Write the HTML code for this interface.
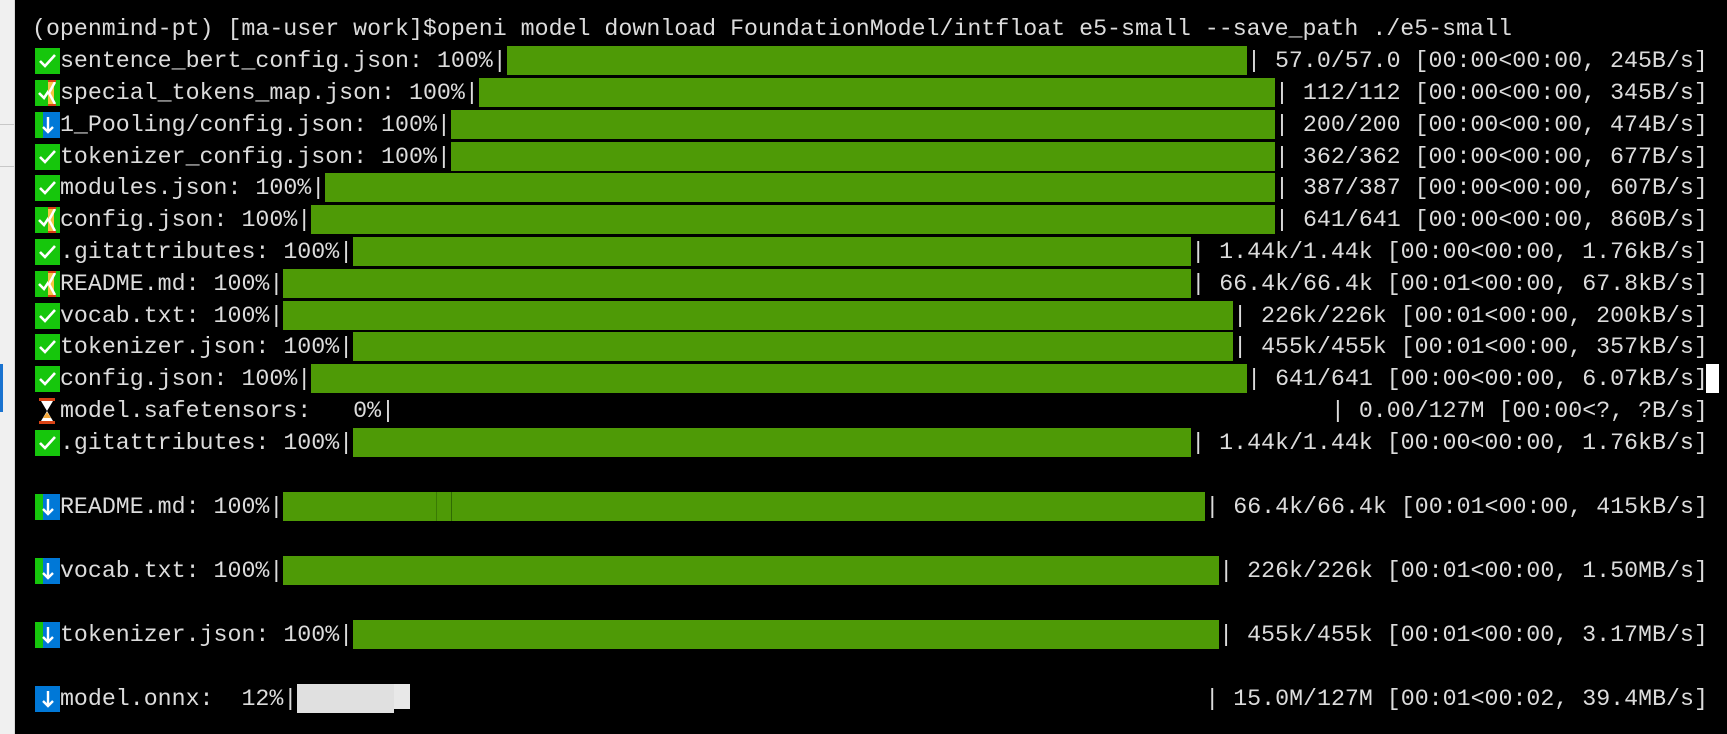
<!DOCTYPE html>
<html><head><meta charset="utf-8">
<style>
html,body{margin:0;padding:0;}
body{width:1727px;height:734px;background:#000;position:relative;overflow:hidden;}
.strip{position:absolute;left:0;top:0;width:14px;height:734px;background:#f0f0f0;border-right:1px solid #d8d8d8;}
.row{position:absolute;left:32px;height:32px;line-height:32px;white-space:pre;font-family:"Liberation Mono",monospace;font-size:23.28px;color:#dcdcdc;}
.b{display:inline-block;height:29px;vertical-align:top;margin-top:1px;background:#4e9a06;}
.e{display:inline-block;height:29px;vertical-align:top;margin-top:1px;}
.ic{display:inline-block;width:27.94px;height:32px;vertical-align:top;position:relative;}
.ic svg{position:absolute;left:3px;top:3px;}
</style></head><body>
<div class="strip"></div>
<div style="position:absolute;left:0;top:124px;width:14px;height:1px;background:#c8c8c8"></div>
<div style="position:absolute;left:0;top:166px;width:14px;height:1px;background:#c8c8c8"></div>
<div style="position:absolute;left:0;top:364px;width:3px;height:48px;background:#1a73d0"></div>

<div class="row" style="top:13px">(openmind-pt) [ma-user work]$openi model download FoundationModel/intfloat e5-small --save_path ./e5-small</div>

<div class="row" style="top:45px"><span class="ic"><svg width="25" height="26"><rect width="25" height="26" fill="#16c60c"/><path d="M5 13 L10 18 L20 7" stroke="#fff" stroke-width="2.6" fill="none"/></svg></span>sentence_bert_config.json: 100%|<span class="b" style="width:740.3px"></span>| 57.0/57.0 [00:00&lt;00:00, 245B/s]</div>

<div class="row" style="top:77px"><span class="ic"><svg width="25" height="26"><rect width="25" height="26" fill="#16c60c"/><path d="M4 13 L9 18 L15 9" stroke="#fff" stroke-width="2.6" fill="none"/><rect x="13" y="1" width="6" height="24" fill="#f4c542"/><path d="M20 2 L14 13 L20 24" stroke="#fff" stroke-width="2.5" fill="none"/><rect x="13" y="0" width="8" height="2" fill="#d84315"/><rect x="13" y="24" width="8" height="2" fill="#d84315"/></svg></span>special_tokens_map.json: 100%|<span class="b" style="width:796.2px"></span>| 112/112 [00:00&lt;00:00, 345B/s]</div>

<div class="row" style="top:109px"><span class="ic"><svg width="25" height="26"><rect width="25" height="26" fill="#0078d7"/><rect width="8" height="26" fill="#16c60c"/><path d="M13 5 V20 M8 15 L13 20 L18 15" stroke="#fff" stroke-width="2.4" fill="none"/></svg></span>1_Pooling/config.json: 100%|<span class="b" style="width:824.1px"></span>| 200/200 [00:00&lt;00:00, 474B/s]</div>

<div class="row" style="top:141px"><span class="ic"><svg width="25" height="26"><rect width="25" height="26" fill="#16c60c"/><path d="M5 13 L10 18 L20 7" stroke="#fff" stroke-width="2.6" fill="none"/></svg></span>tokenizer_config.json: 100%|<span class="b" style="width:824.1px"></span>| 362/362 [00:00&lt;00:00, 677B/s]</div>

<div class="row" style="top:172px"><span class="ic"><svg width="25" height="26"><rect width="25" height="26" fill="#16c60c"/><path d="M5 13 L10 18 L20 7" stroke="#fff" stroke-width="2.6" fill="none"/></svg></span>modules.json: 100%|<span class="b" style="width:949.8px"></span>| 387/387 [00:00&lt;00:00, 607B/s]</div>

<div class="row" style="top:204px"><span class="ic"><svg width="25" height="26"><rect width="25" height="26" fill="#16c60c"/><path d="M4 13 L9 18 L15 9" stroke="#fff" stroke-width="2.6" fill="none"/><rect x="13" y="1" width="6" height="24" fill="#f4c542"/><path d="M20 2 L14 13 L20 24" stroke="#fff" stroke-width="2.5" fill="none"/><rect x="13" y="0" width="8" height="2" fill="#d84315"/><rect x="13" y="24" width="8" height="2" fill="#d84315"/></svg></span>config.json: 100%|<span class="b" style="width:963.8px"></span>| 641/641 [00:00&lt;00:00, 860B/s]</div>

<div class="row" style="top:236px"><span class="ic"><svg width="25" height="26"><rect width="25" height="26" fill="#16c60c"/><path d="M5 13 L10 18 L20 7" stroke="#fff" stroke-width="2.6" fill="none"/></svg></span>.gitattributes: 100%|<span class="b" style="width:838.1px"></span>| 1.44k/1.44k [00:00&lt;00:00, 1.76kB/s]</div>

<div class="row" style="top:268px"><span class="ic"><svg width="25" height="26"><rect width="25" height="26" fill="#16c60c"/><path d="M4 13 L9 18 L15 9" stroke="#fff" stroke-width="2.6" fill="none"/><rect x="13" y="1" width="6" height="24" fill="#f4c542"/><path d="M20 2 L14 13 L20 24" stroke="#fff" stroke-width="2.5" fill="none"/><rect x="13" y="0" width="8" height="2" fill="#d84315"/><rect x="13" y="24" width="8" height="2" fill="#d84315"/></svg></span>README.md: 100%|<span class="b" style="width:908px"></span>| 66.4k/66.4k [00:01&lt;00:00, 67.8kB/s]</div>

<div class="row" style="top:300px"><span class="ic"><svg width="25" height="26"><rect width="25" height="26" fill="#16c60c"/><path d="M5 13 L10 18 L20 7" stroke="#fff" stroke-width="2.6" fill="none"/></svg></span>vocab.txt: 100%|<span class="b" style="width:949.8px"></span>| 226k/226k [00:01&lt;00:00, 200kB/s]</div>

<div class="row" style="top:331px"><span class="ic"><svg width="25" height="26"><rect width="25" height="26" fill="#16c60c"/><path d="M5 13 L10 18 L20 7" stroke="#fff" stroke-width="2.6" fill="none"/></svg></span>tokenizer.json: 100%|<span class="b" style="width:880px"></span>| 455k/455k [00:01&lt;00:00, 357kB/s]</div>

<div class="row" style="top:363px"><span class="ic"><svg width="25" height="26"><rect width="25" height="26" fill="#16c60c"/><path d="M5 13 L10 18 L20 7" stroke="#fff" stroke-width="2.6" fill="none"/></svg></span>config.json: 100%|<span class="b" style="width:935.9px"></span>| 641/641 [00:00&lt;00:00, 6.07kB/s]</div>
<div style="position:absolute;left:1706px;top:364px;width:13px;height:29px;background:#fff"></div>

<div class="row" style="top:395px"><span class="ic"><svg width="25" height="26"><rect x="4" y="0" width="16" height="3" fill="#d84315"/><rect x="4" y="23" width="16" height="3" fill="#d84315"/><path d="M6 3 H18 L12 13 L18 23 H6 L12 13 Z" fill="#fff"/><path d="M8 20 L12 14 L16 20 Z" fill="#f4a83a"/></svg></span>model.safetensors:   0%|<span class="e" style="width:935.9px"></span>| 0.00/127M [00:00&lt;?, ?B/s]</div>

<div class="row" style="top:427px"><span class="ic"><svg width="25" height="26"><rect width="25" height="26" fill="#16c60c"/><path d="M5 13 L10 18 L20 7" stroke="#fff" stroke-width="2.6" fill="none"/></svg></span>.gitattributes: 100%|<span class="b" style="width:838.1px"></span>| 1.44k/1.44k [00:00&lt;00:00, 1.76kB/s]</div>

<div class="row" style="top:491px"><span class="ic"><svg width="25" height="26"><rect width="25" height="26" fill="#0078d7"/><rect width="8" height="26" fill="#16c60c"/><path d="M13 5 V20 M8 15 L13 20 L18 15" stroke="#fff" stroke-width="2.4" fill="none"/></svg></span>README.md: 100%|<span class="b" style="width:922px;position:relative"><span style="position:absolute;left:153px;top:0;width:1px;height:29px;background:#3a7a04"></span><span style="position:absolute;left:168px;top:0;width:1px;height:29px;background:#2f6a03"></span></span>| 66.4k/66.4k [00:01&lt;00:00, 415kB/s]</div>

<div class="row" style="top:555px"><span class="ic"><svg width="25" height="26"><rect width="25" height="26" fill="#0078d7"/><rect width="8" height="26" fill="#16c60c"/><path d="M13 5 V20 M8 15 L13 20 L18 15" stroke="#fff" stroke-width="2.4" fill="none"/></svg></span>vocab.txt: 100%|<span class="b" style="width:935.9px"></span>| 226k/226k [00:01&lt;00:00, 1.50MB/s]</div>

<div class="row" style="top:619px"><span class="ic"><svg width="25" height="26"><rect width="25" height="26" fill="#0078d7"/><rect width="8" height="26" fill="#16c60c"/><path d="M13 5 V20 M8 15 L13 20 L18 15" stroke="#fff" stroke-width="2.4" fill="none"/></svg></span>tokenizer.json: 100%|<span class="b" style="width:866px"></span>| 455k/455k [00:01&lt;00:00, 3.17MB/s]</div>

<div class="row" style="top:683px"><span class="ic"><svg width="25" height="26"><rect width="25" height="26" fill="#0078d7"/><path d="M13 5 V20 M8 15 L13 20 L18 15" stroke="#fff" stroke-width="2.4" fill="none"/></svg></span>model.onnx:  12%|<span class="e" style="width:908px;position:relative"><span style="position:absolute;left:0;top:0;width:97px;height:29px;background:#e0e0e0"></span><span style="position:absolute;left:97px;top:0;width:16px;height:25px;background:#e8e8e8"></span></span>| 15.0M/127M [00:01&lt;00:02, 39.4MB/s]</div>
</body></html>
